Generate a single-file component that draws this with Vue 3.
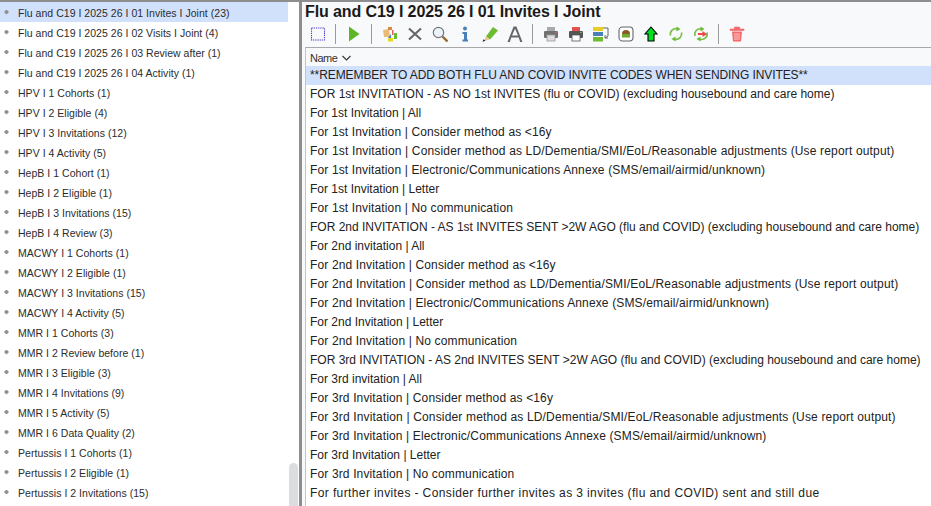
<script setup>
const tree = [
  'Flu and C19 I 2025 26 I 01 Invites I Joint (23)','Flu and C19 I 2025 26 I 02 Visits I Joint (4)','Flu and C19 I 2025 26 I 03 Review after (1)','Flu and C19 I 2025 26 I 04 Activity (1)',
  'HPV I 1 Cohorts (1)','HPV I 2 Eligible (4)','HPV I 3 Invitations (12)','HPV I 4 Activity (5)',
  'HepB I 1 Cohort (1)','HepB I 2 Eligible (1)','HepB I 3 Invitations (15)','HepB I 4 Review (3)',
  'MACWY I 1 Cohorts (1)','MACWY I 2 Eligible (1)','MACWY I 3 Invitations (15)','MACWY I 4 Activity (5)',
  'MMR I 1 Cohorts (3)','MMR I 2 Review before (1)','MMR I 3 Eligible (3)','MMR I 4 Invitations (9)','MMR I 5 Activity (5)','MMR I 6 Data Quality (2)',
  'Pertussis I 1 Cohorts (1)','Pertussis I 2 Eligible (1)','Pertussis I 2 Invitations (15)'
]
const rows = [
  '**REMEMBER TO ADD BOTH FLU AND COVID INVITE CODES WHEN SENDING INVITES**',
  'FOR 1st INVITATION - AS NO 1st INVITES (flu or COVID) (excluding housebound and care home)',
  'For 1st Invitation | All','For 1st Invitation | Consider method as <16y',
  'For 1st Invitation | Consider method as LD/Dementia/SMI/EoL/Reasonable adjustments (Use report output)',
  'For 1st Invitation | Electronic/Communications Annexe (SMS/email/airmid/unknown)',
  'For 1st Invitation | Letter','For 1st Invitation | No communication',
  'FOR 2nd INVITATION - AS 1st INVITES SENT >2W AGO (flu and COVID) (excluding housebound and care home)',
  'For 2nd invitation | All','For 2nd Invitation | Consider method as <16y',
  'For 2nd Invitation | Consider method as LD/Dementia/SMI/EoL/Reasonable adjustments (Use report output)',
  'For 2nd Invitation | Electronic/Communications Annexe (SMS/email/airmid/unknown)',
  'For 2nd Invitation | Letter','For 2nd Invitation | No communication',
  'FOR 3rd INVITATION - AS 2nd INVITES SENT >2W AGO (flu and COVID) (excluding housebound and care home)',
  'For 3rd invitation | All','For 3rd Invitation | Consider method as <16y',
  'For 3rd Invitation | Consider method as LD/Dementia/SMI/EoL/Reasonable adjustments (Use report output)',
  'For 3rd Invitation | Electronic/Communications Annexe (SMS/email/airmid/unknown)',
  'For 3rd Invitation | Letter','For 3rd Invitation | No communication',
  'For further invites - Consider further invites as 3 invites (flu and COVID) sent and still due'
]
function rowClass(r, i) {
  return {
    on: i === 0,
    loose: /Electronic|No communication|<16y/.test(r),
    looser: /LD\/Dementia/.test(r),
    wide: /^For further/.test(r),
    tight: i === 0
  }
}
</script>

<template>
  <div class="app">
    <aside class="left">
      <ul class="tree">
        <li v-for="(t, i) in tree" :key="t" class="node" :class="{ on: i === 0 }">
          <span class="bullet"></span><span>{{ t }}</span>
        </li>
      </ul>
      <div class="track"><div class="thumb"></div></div>
    </aside>
    <main class="right">
      <h1 class="title">Flu and C19 I 2025 26 I 01 Invites I Joint</h1>
      <div class="toolbar">
        <svg class="ic" viewBox="0 0 16 16"><rect x="1.500" y="2" width="13" height="12" fill="none" stroke="#4a3fd0" stroke-width="1.100" stroke-dasharray="1.300 .9"/></svg>
        <i class="sep"></i>
        <svg class="ic" viewBox="0 0 16 16"><path d="M3 0.500v15L13.500 8z" fill="#5fb526"/></svg>
        <i class="sep"></i>
        <svg class="ic" viewBox="0 0 16 16"><path d="M1 4l6-1 1 8H2z" fill="#eabc78"/><rect x="6" y="1" width="4" height="3" fill="#d98a3c"/><rect x="6" y="12" width="5" height="3.500" fill="#e8d820"/><rect x="12" y="7" width="3" height="6" fill="#6cbb30"/><rect x="10" y="4" width="1.500" height="5" fill="#e06060"/><path d="M6 12l3-4v4z" fill="#4a80c0"/></svg>
        <svg class="ic" viewBox="0 0 16 16"><path d="M2 2.500l12 11M14 2.500l-12 11" stroke="#666" stroke-width="2.100"/></svg>
        <svg class="ic" viewBox="0 0 16 16"><circle cx="6.500" cy="6.500" r="5.200" fill="#eaf3fa" stroke="#777" stroke-width="1.200"/><path d="M10.500 10.500l5 5" stroke="#96682e" stroke-width="2.400"/></svg>
        <svg class="ic" viewBox="0 0 16 16"><circle cx="8" cy="2.500" r="2" fill="#4a80b8"/><path d="M5.500 6h4.500v7.500h1V15.500H5.500v-2H7V8H5.500z" fill="#4a80b8"/></svg>
        <svg class="ic" viewBox="0 0 16 16"><path d="M4 10.500L11 1l5 3.500-8 9z" fill="#6cbb30"/><path d="M4 10.500l3.500 3L2 15z" fill="#eec48a"/><path d="M0.500 16l1.200-2.800 1.600 1.400z" fill="#111"/></svg>
        <svg class="ic" viewBox="0 0 16 16"><path d="M0.500 16L6.600 0.500h2.800L15.500 16h-2.300l-1.500-4.500H4.300L2.800 16zM5 9.500h6L8 2.800z" fill="#666"/></svg>
        <i class="sep"></i>
        <svg class="ic" viewBox="0 0 16 16"><rect x="4" y="1" width="8" height="4" fill="#aaa"/><rect x="1" y="5" width="14" height="7" rx="1" fill="#707070"/><rect x="4" y="9" width="8" height="6" fill="#ddd" stroke="#999" stroke-width=".8"/><rect x="12" y="6" width="2" height="1" fill="#e06060"/></svg>
        <svg class="ic" viewBox="0 0 16 16"><rect x="4" y="1" width="8" height="4" fill="#e25050"/><rect x="1" y="5" width="14" height="7" rx="1" fill="#555"/><rect x="4" y="9" width="8" height="6" fill="#fff" stroke="#555" stroke-width=".8"/><rect x="12" y="6" width="2" height="1" fill="#6cbb30"/></svg>
        <svg class="ic" viewBox="0 0 16 16"><rect x="0" y="1" width="10" height="4" fill="#e8cc28"/><rect x="0" y="6" width="10" height="4" fill="#4a80b8"/><rect x="0" y="11" width="10" height="4.500" fill="#6cbb30"/><path d="M10 2h5v8l-3 2M12 9v3h3" fill="none" stroke="#666"/></svg>
        <svg class="ic" viewBox="0 0 16 16"><rect x="1" y="1" width="14" height="14" rx="3.500" fill="#fff" stroke="#666" stroke-width="1.100"/><path d="M4 8a4 4 0 018 0z" fill="#8a5a24"/><rect x="4" y="8" width="8" height="3.500" fill="#6cab30"/></svg>
        <svg class="ic" viewBox="0 0 16 16"><path d="M8 1l6 7h-3v7H5V8H2z" fill="#00e020" stroke="#000" stroke-width="1.100"/></svg>
        <svg class="ic" viewBox="0 0 16 16"><g fill="none" stroke="#7cc04a" stroke-width="1.700"><path d="M2.500 9.500A5.500 5.500 0 0 1 9 2.800"/><path d="M13.500 6.500A5.500 5.500 0 0 1 7 13.200"/></g><path d="M8.500 .5l4 2.500-4 2.500zM7.500 15.500l-4-2.500 4-2.500z" fill="#6cbb30"/></svg>
        <svg class="ic" viewBox="0 0 16 16"><g fill="none" stroke="#7cc04a" stroke-width="1.700"><path d="M2 10A5.500 5.500 0 0 1 8 2.800"/><path d="M14 6.500A5.500 5.500 0 0 1 7 13.200"/></g><path d="M7.500 .5l4 2.500-4 2.500zM7.500 15.500l-4-2.500 4-2.500z" fill="#6cbb30"/><path d="M5 7h4.500V5L14 8l-4.500 3V9H5z" fill="#f04848"/></svg>
        <i class="sep"></i>
        <svg class="ic" viewBox="0 0 16 16"><path d="M1 3h14v1.500H1zM5.500 3V1h5v2" fill="#f46a6a" stroke="#f46a6a" stroke-width=".6"/><path d="M3 5.500h10l-1 10H4z" fill="#f46a6a"/><path d="M6 7v7M8 7v7M10 7v7" stroke="#fdd" stroke-width=".8"/></svg>
      </div>
      <section class="panel">
        <div class="head">
          <span class="name">Name</span>
          <svg width="9" height="6" viewBox="0 0 9 6"><path d="M.5 1l4 4 4-4" fill="none" stroke="#333" stroke-width="1.100"/></svg>
        </div>
        <div v-for="(r, i) in rows" :key="r" class="row" :class="rowClass(r, i)">{{ r }}</div>
      </section>
    </main>
  </div>
</template>

<style>
html, body { margin: 0; padding: 0; background: #f8f9fb; overflow: hidden; }
</style>
<style scoped>
.app {
  width: 931px; height: 506px; display: flex; overflow: hidden;
  font-family: "Liberation Sans", Arial, sans-serif; color: #222;
  background: #f8f9fb; box-sizing: border-box; border-top: 2px solid #8e8e90;
}
.left {
  width: 299px; flex: none; background: #fff; display: flex;
  border-right: 3px solid #8e8e90;
}
.tree { list-style: none; margin: 0; padding: 0; flex: 1; font-size: 10.5px; }
.node { height: 20px; box-sizing: border-box; padding: 2px 0 0 4px; display: flex; align-items: center; gap: 9px; letter-spacing: .03px; color: #2c2c2c; }
.node.on { background: #d1e1fb; }
.bullet { width: 5px; height: 5px; margin-bottom: 2px; background: #8e8e8e; clip-path: polygon(50% 0, 100% 50%, 50% 100%, 0 50%); }
.track { width: 11px; flex: none; display: flex; align-items: flex-end; }
.thumb { width: 9px; height: 43px; margin-left: 1px; background: #dcdde1; border-radius: 5px 5px 0 0; }
.right { flex: 1; min-width: 0; padding-left: 3px; display: flex; flex-direction: column; }
.title { margin: 0; font-size: 16px; line-height: 19px; font-weight: 700; color: #1a1a1a; white-space: nowrap; letter-spacing: -.1px; }
.toolbar {
  height: 26px; display: flex; align-items: center; gap: 9px; padding-left: 5px;
  flex: none; box-sizing: border-box;
}
.ic { width: 16px; height: 16px; flex: none; }
.sep { width: 1px; height: 20px; background: #9a9a9a; flex: none; margin-right: 1px; }
.panel {
  flex: 1; background: #fff; border-top: 1px solid #a8a8aa; border-left: 1px solid #c4c4c6;
  font-size: 12px; min-height: 0;
}
.head { height: 18px; box-sizing: border-box; padding: 2px 0 0 4px; display: flex; align-items: center; gap: 5px; color: #333; background: #f8f9fb; }
.name { font-size: 11px; letter-spacing: -.5px; }
.row { height: 19px; line-height: 19px; padding-left: 4px; white-space: nowrap; color: #222; background: #fff; }
.row.on { background: #d1e1fb; }
.row.loose { letter-spacing: .14px; }
.row.looser { letter-spacing: .16px; }
.row.wide { letter-spacing: .39px; }
.row.tight { letter-spacing: -.083px; }
</style>
